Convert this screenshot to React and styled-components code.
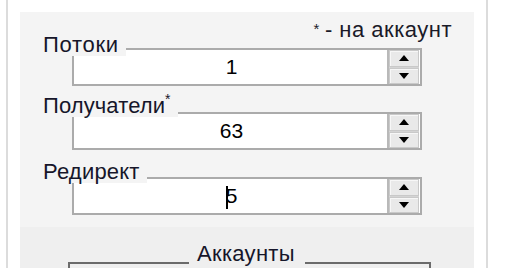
import React from 'react';
import styled, { createGlobalStyle } from 'styled-components';

const GlobalStyle = createGlobalStyle`
  html, body {
    margin: 0;
    padding: 0;
    background: #ffffff;
  }
  body {
    font-family: 'Liberation Sans', Arial, sans-serif;
    color: #111;
  }
`;

const Page = styled.div`
  display: flex;
  width: 512px;
  height: 268px;
  overflow: hidden;
  background: #fff;
`;

const Rule = styled.div`
  flex: none;
  width: 2px;
  margin-left: ${(p) => p.$offset}px;
  background: #dcdcdc;
`;

const Panel = styled.div`
  flex: none;
  width: 454px;
  margin-top: 12px;
  margin-left: 12px;
  display: flex;
  flex-direction: column;
`;

const TopSection = styled.div`
  flex: none;
  height: 215px;
  background: #f4f4f4;
  padding-top: 6px;
  box-sizing: border-box;
`;

const Note = styled.div`
  display: flex;
  justify-content: flex-end;
  align-items: baseline;
  height: 24px;
  line-height: 24px;
  padding-right: 22px;
  font-size: 22px;
  letter-spacing: 0.5px;
  color: #1a1a28;
  sup {
    font-size: 15px;
    line-height: 0;
    position: relative;
    top: -3px;
    margin-right: 5px;
  }
`;

const Field = styled.div`
  position: relative;
  display: flex;
  width: 350px;
  height: 38px;
  margin-left: 52px;
  margin-top: ${(p) => p.$gap}px;
  box-sizing: border-box;
  border: 2px solid #ababab;
  background: #fff;
`;

const FieldLabel = styled.span`
  position: absolute;
  left: -32px;
  top: ${(p) => p.$top}px;
  height: 23px;
  padding: 0 7px 0 1px;
  line-height: 24px;
  font-size: 22px;
  letter-spacing: ${(p) => p.$spacing}px;
  white-space: nowrap;
  color: #16162a;
  background: #f4f4f4;
  sup {
    font-size: 14px;
    line-height: 0;
    position: relative;
    top: -1px;
  }
`;

const Value = styled.div`
  flex: 1;
  display: flex;
  align-items: center;
  justify-content: center;
  font-size: 21px;
  color: #000;
  padding-left: 2px;
`;

const Caret = styled.span`
  display: inline-block;
  width: 2px;
  height: 23px;
  margin-right: -2px;
  background: #000;
  position: relative;
  top: 1px;
`;

const Spinner = styled.div`
  flex: none;
  width: 30px;
  margin-right: 1px;
  display: flex;
  flex-direction: column;
  border-left: 2px solid #b9b9b9;
  background: #d4d4d4;
  gap: 1px;
`;

const SpinButton = styled.div`
  flex: 1;
  display: flex;
  align-items: center;
  justify-content: center;
  background: #e9e9e9;
  border: 1px solid #c9c9c9;
  box-shadow: inset 1px 1px 0 #f7f7f7;
`;

const BottomSection = styled.div`
  flex: 1;
  min-height: 0;
  background: #efefef;
  padding-top: 35px;
`;

const GroupBox = styled.div`
  position: relative;
  height: 40px;
  margin: 0 43px 0 48px;
  border: 2px solid #6b6b6b;
  border-bottom: none;
`;

const GroupTitle = styled.span`
  position: absolute;
  left: 119px;
  top: -22px;
  padding: 0 10px 0 8px;
  line-height: 24px;
  font-size: 22px;
  letter-spacing: 0.3px;
  color: #16162a;
  background: #efefef;
`;

const Arrow = ({ down }) => (
  <svg width="10" height="6" viewBox="0 0 10 6">
    <polygon points={down ? '0,0 10,0 5,6' : '0,6 10,6 5,0'} fill="#000" />
  </svg>
);

const NumberField = ({ label, value, gap, labelTop, spacing = 0.4, caret }) => (
  <Field $gap={gap}>
    <FieldLabel $top={labelTop} $spacing={spacing}>
      {label}
    </FieldLabel>
    <Value>
      {caret && <Caret />}
      {value}
    </Value>
    <Spinner>
      <SpinButton>
        <Arrow />
      </SpinButton>
      <SpinButton>
        <Arrow down />
      </SpinButton>
    </Spinner>
  </Field>
);

export default function App() {
  return (
    <Page>
      <GlobalStyle />
      <Rule $offset={6} />
      <Panel>
        <TopSection>
          <Note>
            <sup>*</sup>- на аккаунт
          </Note>
          <NumberField label="Потоки" value="1" gap={6} labelTop={-17} spacing={0.7} />
          <NumberField
            label={
              <>
                Получатели<sup>*</sup>
              </>
            }
            value="63"
            gap={26}
            labelTop={-20}
            spacing={0.1}
          />
          <NumberField label="Редирект" value="5" gap={27} labelTop={-19} spacing={0.2} caret />
        </TopSection>
        <BottomSection>
          <GroupBox>
            <GroupTitle>Аккаунты</GroupTitle>
          </GroupBox>
        </BottomSection>
      </Panel>
      <Rule $offset={12} />
    </Page>
  );
}
